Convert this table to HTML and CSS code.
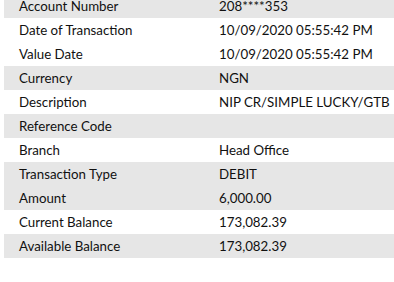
FILE: index.html
```html
<!DOCTYPE html>
<html>
<head>
<meta charset="utf-8">
<link rel="stylesheet" href="styles.css">
</head>
<body>
<div class="details">
  <div class="row shaded"><div class="label">Account Number</div><div class="value">208****353</div></div>
  <div class="row"><div class="label">Date of Transaction</div><div class="value">10/09/2020 05:55:42 PM</div></div>
  <div class="row"><div class="label">Value Date</div><div class="value">10/09/2020 05:55:42 PM</div></div>
  <div class="row shaded"><div class="label">Currency</div><div class="value">NGN</div></div>
  <div class="row"><div class="label">Description</div><div class="value">NIP CR/SIMPLE LUCKY/GTB</div></div>
  <div class="row shaded"><div class="label">Reference Code</div><div class="value"></div></div>
  <div class="row"><div class="label">Branch</div><div class="value">Head Office</div></div>
  <div class="row shaded"><div class="label">Transaction Type</div><div class="value">DEBIT</div></div>
  <div class="row shaded"><div class="label">Amount</div><div class="value">6,000.00</div></div>
  <div class="row"><div class="label">Current Balance</div><div class="value">173,082.39</div></div>
  <div class="row shaded"><div class="label">Available Balance</div><div class="value">173,082.39</div></div>
</div>
</body>
</html>
```
FILE: styles.css
```css
html, body {
  margin: 0;
  padding: 0;
  background: #ffffff;
}
body {
  font-family: Lato, "Open Sans", sans-serif;
  font-size: 13.3px;
  color: #111111;
  overflow: hidden;
}
.details {
  margin: -6px 0 0 4px;
}
.row {
  display: grid;
  grid-template-columns: 200px 1fr;
  height: 24px;
  align-items: center;
}
.row.shaded {
  background: #e6e6e6;
}
.label, .value {
  padding-left: 15px;
  white-space: nowrap;
}
```
